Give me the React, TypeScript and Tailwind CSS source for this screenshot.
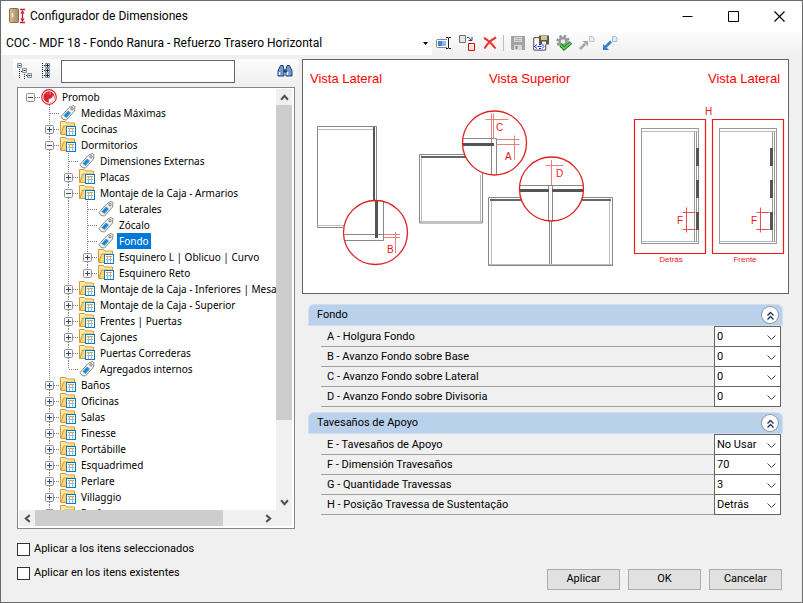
import { useState, type ReactNode } from 'react'

type TreeItem = {
  label: string
  kind?: 'root' | 'tag'
  selected?: boolean
  open?: boolean
  children?: TreeItem[]
}

const tree: TreeItem = {
  label: 'Promob',
  kind: 'root',
  open: true,
  children: [
    { label: 'Medidas Máximas', kind: 'tag' },
    { label: 'Cocinas' },
    {
      label: 'Dormitorios',
      open: true,
      children: [
        { label: 'Dimensiones Externas', kind: 'tag' },
        { label: 'Placas' },
        {
          label: 'Montaje de la Caja - Armarios',
          open: true,
          children: [
            { label: 'Laterales', kind: 'tag' },
            { label: 'Zócalo', kind: 'tag' },
            { label: 'Fondo', kind: 'tag', selected: true },
            { label: 'Esquinero L | Oblicuo | Curvo' },
            { label: 'Esquinero Reto' },
          ],
        },
        { label: 'Montaje de la Caja - Inferiores | Mesa' },
        { label: 'Montaje de la Caja - Superior' },
        { label: 'Frentes | Puertas' },
        { label: 'Cajones' },
        { label: 'Puertas Correderas' },
        { label: 'Agregados internos', kind: 'tag' },
      ],
    },
    { label: 'Baños' },
    { label: 'Oficinas' },
    { label: 'Salas' },
    { label: 'Finesse' },
    { label: 'Portábille' },
    { label: 'Esquadrimed' },
    { label: 'Perlare' },
    { label: 'Villaggio' },
    { label: 'Perfore' },
  ],
}

const groups = [
  {
    title: 'Fondo',
    rows: [
      { id: 'a', label: 'A - Holgura Fondo', value: '0' },
      { id: 'b', label: 'B - Avanzo Fondo sobre Base', value: '0' },
      { id: 'c', label: 'C - Avanzo Fondo sobre Lateral', value: '0' },
      { id: 'd', label: 'D - Avanzo Fondo sobre Divisoria', value: '0' },
    ],
  },
  {
    title: 'Tavesaños de Apoyo',
    rows: [
      { id: 'e', label: 'E - Tavesaños de Apoyo', value: 'No Usar' },
      { id: 'f', label: 'F - Dimensión Travesaños', value: '70' },
      { id: 'g', label: 'G - Quantidade Travessas', value: '3' },
      { id: 'h', label: 'H - Posição Travessa de Sustentação', value: 'Detrás' },
    ],
  },
]

function Icon({ children }: { children: ReactNode }) {
  return (
    <svg className="size-4 shrink-0" viewBox="0 0 16 16" fill="none" aria-hidden="true">
      {children}
    </svg>
  )
}

function FolderIcon() {
  return (
    <Icon>
      <path d="M.5 13.500v-13h5l1 1.500h8v4" fill="#ffe9a8" stroke="#cf9a3c" />
      <path d="M1 13.500L3.500 5h11v8.500z" fill="#f9d67c" stroke="#cf9a3c" />
      <rect x="6.500" y="5.500" width="9" height="9" fill="#fff" stroke="#1579b5" />
      <path d="M8 7.500h6" stroke="#f0a030" />
      <path d="M8 10.500h6M9.500 8v6M12.500 8v6" stroke="#8fbfe6" />
    </Icon>
  )
}

function TagIcon() {
  return (
    <Icon>
      <path d="M1 11.500L9 2.500l4-2 2 1-.5 4.500-8 9-3.500-.5z" fill="#f3f3f3" stroke="#8a8a8a" />
      <circle cx="12" cy="3.800" r="1.200" fill="#fff" stroke="#777" />
      <path d="M3.500 10.500l4.500-5 3 2.500-4.500 5z" fill="#2f9be0" />
      <path d="M5 11.500L8.500 7.500" stroke="#1469a8" />
    </Icon>
  )
}

function PromobIcon() {
  return (
    <Icon>
      <circle cx="8" cy="8" r="7.300" fill="#fff" stroke="#d9232e" strokeWidth="1.200" />
      <circle cx="8" cy="8" r="5.700" fill="#d9232e" />
      <path d="M7.800 14V9.500c2.500 0 4-1 4-3.500 2.500 2 2 7-4 8z" fill="#fff" />
      <path d="M8 9c1.500 0 2.500-.5 3-2" stroke="#d9232e" strokeWidth="1.500" />
      <path d="M5.500 5l1-.8M9 3.500v2" stroke="#f6b5b8" />
    </Icon>
  )
}

// One 19px wide column of dotted guide lines in front of a tree row
function Guide({ up, down, side }: { up?: boolean; down?: boolean; side?: boolean }) {
  return (
    <svg className="h-4 w-[19px] shrink-0" viewBox="0 0 19 16" aria-hidden="true">
      <g stroke="#808080" strokeDasharray="1 1">
        {up && <path d="M9.500 0v8" />}
        {down && <path d="M9.500 8v8" />}
        {side && <path d="M10 8.500h9" />}
      </g>
    </svg>
  )
}

function Expander({ open, up, down, onClick }: { open: boolean; up: boolean; down: boolean; onClick: () => void }) {
  return (
    <button type="button" className="h-4 w-[19px] shrink-0" aria-label={open ? 'Contraer' : 'Expandir'} onClick={onClick}>
      <svg className="h-4 w-[19px]" viewBox="0 0 19 16" aria-hidden="true">
        <g stroke="#808080" strokeDasharray="1 1">
          {up && <path d="M9.500 0v4" />}
          {down && <path d="M9.500 13v3" />}
          <path d="M14 8.500h5" />
        </g>
        <rect x="5.500" y="4.500" width="8" height="8" rx="1" fill="#f6f6f6" stroke="#919191" />
        <path d="M7 8.500h5" stroke="#34497e" />
        {!open && <path d="M9.500 6v5" stroke="#34497e" />}
      </svg>
    </button>
  )
}

function TreeNode({ item, lines, last }: { item: TreeItem; lines: boolean[]; last: boolean }) {
  const [open, setOpen] = useState(item.open ?? false)
  const isRoot = item.kind === 'root'
  const isTag = item.kind === 'tag'
  return (
    <li>
      <div className="flex h-4 items-center whitespace-nowrap">
        {lines.map((line, i) => (
          <Guide key={i} up={line} down={line} />
        ))}
        {isTag ? (
          <Guide up down={!last} side />
        ) : (
          <Expander open={open} up={!isRoot} down={!last} onClick={() => setOpen(!open)} />
        )}
        <span className="ml-px">{isRoot ? <PromobIcon /> : isTag ? <TagIcon /> : <FolderIcon />}</span>
        <span className={`ml-[3px] px-0.5 leading-4 ${item.selected ? 'bg-[#0078d7] text-white' : ''}`}>{item.label}</span>
      </div>
      {open && item.children && (
        <ul>
          {item.children.map((child, i) => (
            <TreeNode
              key={child.label}
              item={child}
              lines={[...lines, !last]}
              last={!isRoot && i === item.children!.length - 1}
            />
          ))}
        </ul>
      )}
    </li>
  )
}

function ScrollArrow({ d, label }: { d: string; label: string }) {
  return (
    <button type="button" aria-label={label} className="flex size-4 shrink-0 items-center justify-center">
      <svg className="size-[9px]" viewBox="0 0 8 8" fill="none" stroke="#505050" strokeWidth="1.800" aria-hidden="true">
        <path d={d} />
      </svg>
    </button>
  )
}

function TreePanel() {
  return (
    <div className="ml-1 mr-[3px] mt-1 flex min-h-0 flex-1 flex-col border border-[#828790] bg-white p-px pr-0.5 pb-0.5">
      <div className="flex min-h-0 flex-1">
        <ul className="min-w-0 flex-1 overflow-hidden pl-0.5 font-['Noto_Sans',sans-serif] text-[10px]">
          <TreeNode item={tree} lines={[]} last />
        </ul>
        <div className="flex w-4 flex-col bg-[#f0f0f0]">
          <ScrollArrow label="Arriba" d="M1 6l3-3.500L7 6" />
          <div className="flex-[314] bg-[#cdcdcd]" />
          <div className="flex-[74]" />
          <ScrollArrow label="Abajo" d="M1 2l3 3.500L7 2" />
        </div>
      </div>
      <div className="flex h-4 bg-[#f0f0f0] pr-4">
        <ScrollArrow label="Izquierda" d="M6 1L2.500 4 6 7" />
        <div className="flex-[187] bg-[#cdcdcd]" />
        <div className="flex-[37]" />
        <ScrollArrow label="Derecha" d="M2 1l3.500 3L2 7" />
      </div>
    </div>
  )
}

function CaptionButton({ label, children }: { label: string; children: ReactNode }) {
  return (
    <button type="button" aria-label={label} className="flex h-full w-[46px] items-center justify-center hover:bg-gray-200">
      <svg className="size-[11px]" viewBox="0 0 11 11" fill="none" stroke="#000" aria-hidden="true">
        {children}
      </svg>
    </button>
  )
}

function TitleBar() {
  return (
    <header className="flex h-[30px] items-center bg-white pl-2">
      <svg className="h-4 w-[17px]" viewBox="0 0 17 16" fill="none" aria-hidden="true">
        <defs>
          <linearGradient id="door" x2="1">
            <stop offset="0" stopColor="#d9bf94" />
            <stop offset="1" stopColor="#a98a60" />
          </linearGradient>
        </defs>
        <rect x=".5" y=".5" width="9" height="14" rx="1" fill="url(#door)" stroke="#8a7048" />
        <path d="M3.500 5v4" stroke="#f5f5f5" strokeWidth="1.500" />
        <path d="M11 1.500h5M11 14.500h5M13.500 3v10" stroke="#d8142c" strokeWidth="1.300" />
        <path d="M11.500 5.500l2-3.500 2 3.500zM11.500 10.500l2 3.500 2-3.500z" fill="#d8142c" />
      </svg>
      <h1 className="ml-1 flex-1 text-xs">Configurador de Dimensiones</h1>
      <CaptionButton label="Minimizar">
        <path d="M.5 5.500h10" />
      </CaptionButton>
      <CaptionButton label="Maximizar">
        <path d="M.5.5h10v10H.5z" />
      </CaptionButton>
      <CaptionButton label="Cerrar">
        <path d="M.5.5l10 10M10.500.5l-10 10" strokeWidth="1.200" />
      </CaptionButton>
    </header>
  )
}

function ToolButton({ label, children }: { label: string; children: ReactNode }) {
  return (
    <button type="button" title={label} aria-label={label} className="flex h-6 w-[23px] items-center justify-center">
      <Icon>{children}</Icon>
    </button>
  )
}

function Toolbar() {
  return (
    <div className="flex h-6 items-center bg-linear-to-b from-[#fdfdfd] to-[#f0f0f0] pl-px">
      <div className="relative flex h-full w-[430px] items-center bg-white">
        <select aria-label="Configuración" className="h-full w-full appearance-none pl-1 text-xs leading-4 outline-none">
          <option>COC - MDF 18 - Fondo Ranura - Refuerzo Trasero Horizontal</option>
        </select>
        <svg className="pointer-events-none absolute right-1 h-[3px] w-[5px]" viewBox="0 0 5 3" aria-hidden="true">
          <path d="M0 0h5L2.500 3z" />
        </svg>
      </div>
      <ToolButton label="Renombrar">
        <rect x=".5" y="4.500" width="12" height="8" rx="1" fill="#fff" stroke="#888" />
        <path d="M2 6h8v5H2z" fill="#3e83e0" />
        <path d="M6 6h4v5H6z" fill="#8ab8f2" />
        <path d="M12.500 2v11" stroke="#fff" strokeWidth="3" />
        <path d="M10 2.500h2l.5.500.500-.5h2M10 13.500h2l.5-.5.500.500h2M12.500 3v10" stroke="#222" />
      </ToolButton>
      <ToolButton label="Duplicar">
        <path d="M.5 .5h6v7h-6z" fill="#e6e6e6" stroke="#776a6a" />
        <path d="M9.500 8.500h6v7h-6z" fill="#f4e6e6" stroke="#e60000" />
        <path d="M8 2.500h2l2.500 3M9.500 5.500h3.500V2" stroke="#1c3f94" />
      </ToolButton>
      <ToolButton label="Eliminar">
        <path d="M2 3c4 2 8 6 11.500 10.500M14 2.500C9 5 5 9 2.500 13.500" stroke="#f03030" strokeWidth="2" />
      </ToolButton>
      <span className="mx-0.5 h-4 w-px bg-[#bdbdbd]" />
      <ToolButton label="Guardar">
        <path d="M1 1h14v14H2l-1-1z" fill="#a2a2a2" />
        <path d="M4 2h8v5H4zM4 10h8v5H4z" fill="#d8d8d8" />
        <path d="M5 3.500h6M5 5.500h6" stroke="#b0b0b0" />
        <path d="M6.500 11v3" stroke="#8a8a8a" strokeWidth="2" />
      </ToolButton>
      <ToolButton label="Guardar como">
        <rect x=".7" y="2.700" width="12" height="12.500" rx="1" fill="#fff" stroke="#666" strokeWidth="1.200" />
        <path d="M6 .5h10v9H7l-1-1z" fill="#5d5a45" />
        <path d="M8 1h6v4H8z" fill="#cbc79a" />
        <path d="M9 6.500h4v3H9z" fill="#eee" />
        <path d="M4 9.500l-2.500 2L4 13.500M9 9.500l2 2-2 2" stroke="#1c2fe8" />
        <path d="M4.500 11.500h4M6 9.500h2M6 13.500h2" stroke="#1c2fe8" />
      </ToolButton>
      <ToolButton label="Validar">
        <circle cx="7" cy="6.500" r="5.600" stroke="#909090" strokeWidth="2.200" strokeDasharray="2.400 2" />
        <circle cx="7" cy="6.500" r="3.500" fill="#eee" stroke="#9a9a9a" strokeWidth="2.600" />
        <path d="M4.500 9.500l3.500 4L15 7.500" stroke="#1b7a22" strokeWidth="3.600" />
        <path d="M4.500 9.500l3.500 4L15 7.500" stroke="#55cc55" strokeWidth="1.800" />
      </ToolButton>
      <ToolButton label="Exportar">
        <path d="M1 14l5-5" stroke="#a8a8a8" strokeWidth="2.600" />
        <path d="M3.500 6H9v5.500z" fill="#a8a8a8" />
        <path d="M10.500 1.500h3l1.500 1.500v3.500h-4.500z" fill="#eee" stroke="#c3c3c3" />
      </ToolButton>
      <ToolButton label="Importar">
        <path d="M3.500 12l5.500-5.500" stroke="#3180d0" strokeWidth="2.600" />
        <path d="M1 9v6h6z" fill="#3180d0" />
        <path d="M10.500 1.500h3l1.500 1.500v3.500h-4.500z" fill="#e2edfa" stroke="#9dbde2" />
      </ToolButton>
    </div>
  )
}

function TreeToolbar() {
  return (
    <div className="flex h-6 items-center bg-linear-to-b from-[#fdfdfd] to-[#f0f0f0] pl-1 pr-[5px]">
      <button type="button" aria-label="Contraer todo" className="mr-2">
        <Icon>
          <path d="M2.500 6v10M7.500 11v5M4 8.500h2M9 12.500h2" stroke="#222" strokeDasharray="1 1" />
          <g fill="#e8eef5" stroke="#7f93a8">
            <path d="M.5 .5h4v4h-4zM5.500 5.500h4v4h-4zM10.500 10.500h4v4h-4z" />
          </g>
          <path d="M1.500 2.500h2M6.500 7.500h2M11.500 12.500h2" stroke="#222" />
        </Icon>
      </button>
      <button type="button" aria-label="Expandir todo" className="mr-1">
        <Icon>
          <path d="M1.500 0v16M3 2.500h2M3 7.500h2M3 12.500h2" stroke="#222" strokeDasharray="1 1" />
          <g fill="#e8eef5" stroke="#7f93a8">
            <path d="M4.500 .5h4v4h-4zM4.500 5.500h4v4h-4zM4.500 10.500h4v4h-4z" />
          </g>
          <path d="M5 2.500h3M6.500 1v3M5 7.500h3M6.500 6v3M5 12.500h3M6.500 11v3" stroke="#222" />
        </Icon>
      </button>
      <input aria-label="Buscar" className="h-[23px] min-w-0 flex-1 border border-[#646464] bg-white px-1 outline-none" />
      <button type="button" aria-label="Buscar en el árbol" className="ml-[42px]">
        <Icon>
          <path d="M3.500 2.500h2.500l1 4v6.500H1V8z" fill="#6f9bd0" stroke="#1f3f74" />
          <path d="M12.500 2.500H10l-1 4v6.500h6V8z" fill="#6f9bd0" stroke="#1f3f74" />
          <path d="M6.500 6.500h3v3h-3z" fill="#1f3f74" />
          <path d="M2.500 9v3M10.500 9v3" stroke="#fff" strokeWidth="1.500" />
        </Icon>
      </button>
    </div>
  )
}

function CabinetSide({ x, divider, block }: { x: number; divider: number; block: number }) {
  return (
    <g>
      <rect x={x} y="69.500" width="57" height="115" stroke="#999" />
      <path d={`M${x} 72.500h57M${x} 182.500h57`} stroke="#bbb" />
      <path d={`M${divider} 72.500v110M${divider + 2} 72.500v110`} stroke="#999" />
      <g fill="#555">
        <rect x={block} y="89" width="3" height="18" />
        <rect x={block} y="121" width="3" height="18" />
        <rect x={block} y="153" width="3" height="18" />
      </g>
    </g>
  )
}

function Diagram() {
  return (
    <figure className="mr-[13px] border border-[#646464] bg-white">
      <svg
        className="block w-full font-['Liberation_Sans',sans-serif]"
        viewBox="1 1 485 233"
        fill="none"
        role="img"
        aria-label="Vistas del mueble"
      >
        <g fill="#f00" fontSize="13">
          <text x="8" y="24">Vista Lateral</text>
          <text x="187" y="24">Vista Superior</text>
          <text x="406" y="24">Vista Lateral</text>
        </g>

        {/* side view */}
        <g stroke="#888">
          <path d="M41 168.500H15.500v-101h59v74" />
          <path d="M15.500 70.500h56M15.500 166.500H42" stroke="#bbb" />
          <path d="M72 68v74" stroke="#555" strokeWidth="2" />
          <path d="M42.500 175.500h39M42.500 181.500h39M81.500 142.500v39" />
          <path d="M74.500 141.500v37.500" stroke="#555" strokeWidth="3" />
        </g>
        <g stroke="#e88080">
          <path d="M82 175.500h16M82 178.500h16M93.500 173v21" />
        </g>
        <circle cx="73.500" cy="173.500" r="32" stroke="#e02020" strokeWidth="1.300" />

        {/* top view, single box */}
        <g stroke="#888">
          <path d="M163 95.500h-45.500v68.500h63v-51" />
          <path d="M119.500 96v67M178.500 116v47M118 162.500h62" stroke="#bbb" />
          <path d="M119 98h45" stroke="#666" strokeWidth="2" />
          <path d="M160.500 79.500h34v35.500M189.500 79.500v36" />
          <path d="M160.500 85.500H192" stroke="#555" strokeWidth="3" />
        </g>
        <g stroke="#e88080">
          <path d="M183.500 60.500h23M189.500 54.500v25M191.500 54.500v25M194.500 80.500h23M194.500 85.500h23M212.500 76.500v24" />
        </g>
        <circle cx="192.500" cy="84" r="32" stroke="#e02020" strokeWidth="1.300" />

        {/* top view, double box */}
        <g stroke="#888">
          <path d="M219 138.500h-32.500v68h124v-68H280M247.500 162v44M249.500 162v44" />
          <path d="M189.500 139v67M307.500 139v67M187 205.500h123" stroke="#bbb" />
          <path d="M188 141h32M280 141h29" stroke="#666" strokeWidth="2" />
          <path d="M218 126.500h64M246.500 126.500v36M250.500 126.500v36" />
          <path d="M218 131.500h29M250 131.500h31.500" stroke="#555" strokeWidth="3" />
        </g>
        <g stroke="#e88080">
          <path d="M249.500 101v25M243.500 106.500h18" />
        </g>
        <circle cx="249.500" cy="130" r="32" stroke="#e02020" strokeWidth="1.300" />

        {/* back / front position */}
        <CabinetSide x={339.5} divider={392.5} block={394} />
        <CabinetSide x={417.5} divider={470.5} block={468} />
        <path d="M332.500 60.500h71v134h-71zM410.500 60.500h71v134h-71z" stroke="#f01818" strokeWidth="1.200" />
        <g stroke="#e85050">
          <path d="M380.500 153.500h13M380.500 170.500h13M384.500 148.500v25" />
          <path d="M454.500 153.500h13M454.500 170.500h13M458.500 148.500v25" />
        </g>

        <g fill="#e81818" fontSize="10">
          <text x="85" y="194">B</text>
          <text x="194" y="72">C</text>
          <text x="203" y="101">A</text>
          <text x="254" y="118">D</text>
          <text x="403" y="56">H</text>
          <text x="375" y="165">F</text>
          <text x="449" y="165">F</text>
        </g>
        <g fill="#f01818" fontSize="8" textAnchor="middle">
          <text x="369" y="203">Detrás</text>
          <text x="443" y="203">Frente</text>
        </g>
      </svg>
    </figure>
  )
}

function ParamGroup({ title, rows }: { title: string; rows: { id: string; label: string; value: string }[] }) {
  const [open, setOpen] = useState(true)
  return (
    <section>
      <div className="flex h-[22px] items-center justify-between rounded-t-md border border-[#cfdff1] bg-[#b9d1ea] pl-2 pr-1">
        <h2>{title}</h2>
        <button
          type="button"
          aria-label={`Contraer ${title}`}
          onClick={() => setOpen(!open)}
          className="flex size-4 items-center justify-center rounded-full bg-white shadow-[0_0_0_1px_#9099a8]"
        >
          <svg className="size-[9px]" viewBox="0 0 9 9" fill="none" stroke="#1f2f5c" strokeWidth="1.300" aria-hidden="true">
            <path d="M1.500 4.500l3-3 3 3M1.500 8.500l3-3 3 3" />
          </svg>
        </button>
      </div>
      {open && (
        <div className="ml-[13px] mr-0.5">
          {rows.map((row, i) => (
            <div key={row.id} className={`flex border-b border-[#a0a0a0] ${i === 0 ? 'h-[21px]' : 'h-5'}`}>
              <label htmlFor={row.id} className="flex flex-1 items-center pl-1.5 pt-0.5">
                {row.label}
              </label>
              <div className={`relative -mb-px w-[67px] border border-[#646464] bg-white ${i === 0 ? '' : 'border-t-0'}`}>
                <select id={row.id} className="block h-full w-full appearance-none pl-0.5 leading-4 outline-none">
                  <option>{row.value}</option>
                </select>
                <svg
                  className="pointer-events-none absolute right-1 top-2 h-[5px] w-[9px]"
                  viewBox="0 0 9 5"
                  fill="none"
                  stroke="#444"
                  aria-hidden="true"
                >
                  <path d="M.5.5l4 4 4-4" />
                </svg>
              </div>
            </div>
          ))}
        </div>
      )}
    </section>
  )
}

function ApplyOption({ label }: { label: string }) {
  return (
    <label className="flex h-6 items-center gap-1">
      <input type="checkbox" className="size-[13px] appearance-none border border-[#333] bg-white checked:bg-[#0078d7]" />
      {label}
    </label>
  )
}

export default function App() {
  return (
    <div className="flex h-screen flex-col border border-[#6b6b6b] bg-[#f0f0f0] font-['Roboto',sans-serif] text-[11px] text-black">
      <TitleBar />
      <Toolbar />
      <main className="flex min-h-0 flex-1 pt-1">
        <div className="flex w-[297px] shrink-0 flex-col pb-[17px] pl-3">
          <TreeToolbar />
          <TreePanel />
          <div className="ml-1 mt-2">
            <ApplyOption label="Aplicar a los itens seleccionados" />
            <ApplyOption label="Aplicar en los itens existentes" />
          </div>
        </div>
        <div className="flex min-w-0 flex-1 flex-col pl-1">
          <Diagram />
          <div className="ml-1.5 mr-[19px] mt-2.5 flex flex-col gap-[5px]">
            {groups.map((group) => (
              <ParamGroup key={group.title} title={group.title} rows={group.rows} />
            ))}
          </div>
          <div className="mb-3 mr-5 mt-auto flex justify-end gap-2">
            {['Aplicar', 'OK', 'Cancelar'].map((label) => (
              <button key={label} type="button" className="h-[21px] w-[73px] border border-[#adadad] bg-[#e1e1e1]">
                {label}
              </button>
            ))}
          </div>
        </div>
      </main>
    </div>
  )
}
